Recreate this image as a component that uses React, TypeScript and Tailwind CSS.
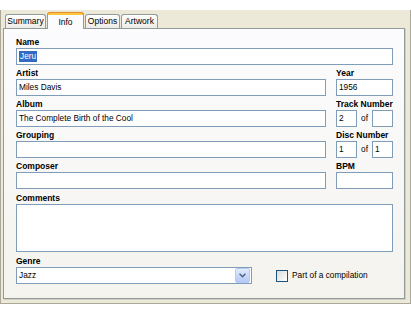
import React from "react";

const font = { fontFamily: '"Liberation Sans", Arial, sans-serif' };

function Label({ children, h = "h-[14px]" }: { children: React.ReactNode; h?: string }) {
  return (
    <div className={`${h} flex items-end`}>
      <span className="text-[8.5px] font-bold leading-[10px] text-black pb-[1px]">{children}</span>
    </div>
  );
}

function Field({ value, className = "" }: { value?: React.ReactNode; className?: string }) {
  return (
    <div
      className={`h-[17px] border border-[#7f9db9] bg-white flex items-center pl-[2px] text-[8.3px] text-black overflow-hidden whitespace-nowrap ${className}`}
    >
      {value}
    </div>
  );
}

function Pair({ a, b }: { a?: string; b?: string }) {
  return (
    <div className="flex items-center">
      <Field value={a} className="w-[21px]" />
      <span className="w-[15px] text-center text-[8.3px] text-black">of</span>
      <Field value={b} className="w-[21px]" />
    </div>
  );
}

function Tab({ label, w, active }: { label: string; w: string; active?: boolean }) {
  if (active) {
    return (
      <div className={`${w} h-[17px] -mb-px relative z-10 flex flex-col`}>
        <div className="h-[3px] rounded-t-[3px] border-x border-t border-[#e68b2c] bg-[#ffc83c]" />
        <div className="flex-1 border-x border-[#919b9c] bg-[#fcfcfe] flex items-start justify-center pt-[1px] text-[8.5px] text-black">
          {label}
        </div>
      </div>
    );
  }
  return (
    <div
      className={`${w} h-[14px] rounded-t-[3px] border-x border-t border-[#919b9c] bg-gradient-to-b from-white to-[#ecebe6] flex items-center justify-center text-[8.5px] text-black`}
    >
      {label}
    </div>
  );
}

export default function App() {
  return (
    <div className="w-[411px] h-[319px] bg-white pt-[10px]" style={font}>
      <div className="h-[294px] bg-[#ece9d8] border-x border-b border-[#aca899] pl-[2px] pt-[2px] flex flex-col">
        <div className="h-[16px] flex items-end gap-[1px] pl-[2px]">
          <Tab label="Summary" w="w-[41px]" />
          <Tab label="Info" w="w-[37px]" active />
          <Tab label="Options" w="w-[35px]" />
          <Tab label="Artwork" w="w-[37px]" />
        </div>
        <div className="w-[402px] h-[271px] border border-[#919b9c] shadow-[1px_1px_0_#d0cebf] bg-gradient-to-b from-[#fcfcfe] to-[#f4f3ee] pl-[12px] pr-[11px] pt-[5px]">
          <Label>Name</Label>
          <Field
            value={<span className="bg-[#316ac5] text-white px-[1px] leading-[11px]">Jeru</span>}
          />

          <div className="flex gap-[10px]">
            <div className="w-[310px]">
              <Label>Artist</Label>
              <Field value="Miles Davis" />
              <Label>Album</Label>
              <Field value="The Complete Birth of the Cool" />
              <Label>Grouping</Label>
              <Field />
              <Label>Composer</Label>
              <Field />
            </div>
            <div className="w-[57px]">
              <Label>Year</Label>
              <Field value="1956" />
              <Label>Track Number</Label>
              <Pair a="2" />
              <Label>Disc Number</Label>
              <Pair a="1" b="1" />
              <Label>BPM</Label>
              <Field />
            </div>
          </div>

          <Label h="h-[15px]">Comments</Label>
          <div className="h-[48px] border border-[#7f9db9] bg-white" />

          <Label h="h-[15px]">Genre</Label>
          <div className="flex items-center">
            <div className="w-[236px] h-[17px] border border-[#7f9db9] bg-white flex items-center justify-between pl-[2px] pr-[1px] text-[8.3px] text-black">
              <span>Jazz</span>
              <div className="w-[15px] h-[15px] rounded-[2px] border border-[#b9cbf3] bg-gradient-to-b from-[#e1eafe] to-[#b4c8f6] flex items-center justify-center">
                <svg width="7" height="5" viewBox="0 0 7 5">
                  <path d="M0.5 0.8 L3.5 3.8 L6.5 0.8" fill="none" stroke="#4d6185" strokeWidth="1.5" />
                </svg>
              </div>
            </div>
            <div className="ml-[24px] w-[12px] h-[12px] border border-[#1c5180] bg-gradient-to-br from-[#dcdcd7] to-white" />
            <span className="ml-[4px] text-[8.3px] text-black">Part of a compilation</span>
          </div>
        </div>
      </div>
    </div>
  );
}
